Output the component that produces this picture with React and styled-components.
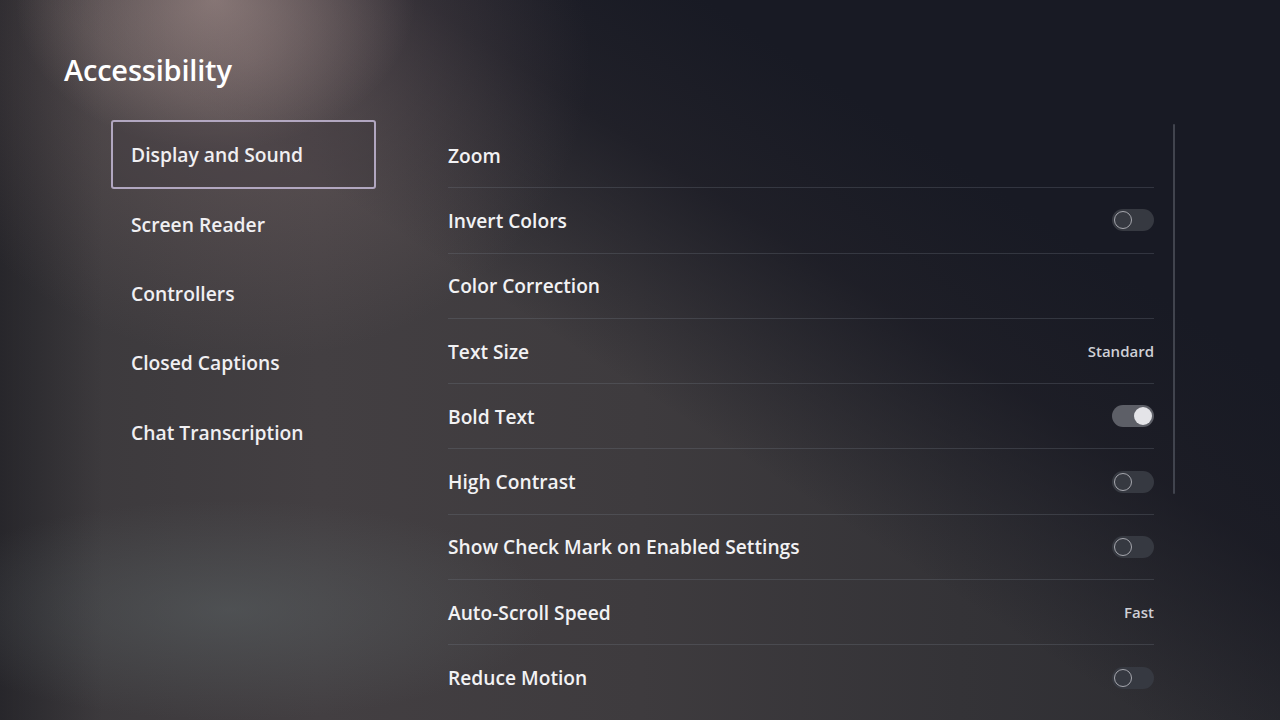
import React from "react";
import styled, { createGlobalStyle } from "styled-components";

const GlobalStyle = createGlobalStyle`
  html, body {
    margin: 0;
    padding: 0;
    background: #1a1c24;
  }
  * {
    box-sizing: border-box;
  }
`;

const Screen = styled.div`
  position: relative;
  width: 1280px;
  height: 720px;
  overflow: hidden;
  font-family: "Open Sans", "Noto Sans", sans-serif;
  color: #f2f2f4;
  background:
    radial-gradient(ellipse 200px 150px at 215px 0px, rgba(190, 165, 160, 0.5), rgba(190, 165, 160, 0) 100%),
    radial-gradient(ellipse 340px 300px at 250px 60px, rgba(140, 118, 118, 0.4), rgba(140, 118, 118, 0) 100%),
    radial-gradient(ellipse 320px 110px at 230px 610px, rgba(92, 100, 102, 0.5), rgba(92, 100, 102, 0) 100%),
    linear-gradient(90deg, rgba(24, 24, 30, 0.55) 0%, rgba(24, 24, 30, 0) 8%),
    linear-gradient(33deg, rgba(22, 23, 33, 0) 0%, rgba(22, 23, 33, 0) 48%, rgba(22, 23, 33, 0.75) 64%, rgba(24, 26, 36, 1) 76%),
    linear-gradient(90deg, #3a383b 0%, #433f42 25%, #3e3b3e 50%, #343337 75%, #2c2c31 100%);
`;

const Header = styled.header`
  height: 120px;
  padding: 50px 0 0 64px;
`;

const Title = styled.h1`
  margin: 0;
  font-size: 29px;
  line-height: 40px;
  font-weight: 600;
  letter-spacing: -0.2px;
  color: #ffffff;
`;

const Body = styled.div`
  display: flex;
  align-items: flex-start;
  padding-left: 111px;
`;

const Nav = styled.nav`
  display: flex;
  flex-direction: column;
  width: 265px;
`;

const NavItem = styled.div`
  height: 69.4px;
  display: flex;
  align-items: center;
  padding-left: 18px;
  font-size: 19.3px;
  font-weight: 600;
  color: #f0eff2;
  border: 2px solid ${(p) => (p.$active ? "rgba(196, 186, 214, 0.85)" : "transparent")};
  border-radius: 3px;
  background: ${(p) => (p.$active ? "rgba(60, 54, 60, 0.35)" : "transparent")};
`;

const List = styled.section`
  width: 706px;
  margin-left: 72px;
  padding-top: 3px;
`;

const Row = styled.div`
  height: 65.3px;
  display: flex;
  align-items: center;
  justify-content: space-between;
  border-bottom: 1px solid ${(p) => (p.$last ? "transparent" : "rgba(120, 124, 136, 0.28)")};
`;

const Label = styled.span`
  font-size: 19.2px;
  font-weight: 600;
  color: #f2f2f4;
`;

const Value = styled.span`
  font-size: 15px;
  font-weight: 600;
  color: #cfd0d6;
`;

const Track = styled.div`
  position: relative;
  width: 42px;
  height: 22px;
  border-radius: 11px;
  background: ${(p) => (p.$on ? "#5d5f67" : "#363941")};
`;

const Knob = styled.div`
  position: absolute;
  top: 2px;
  left: ${(p) => (p.$on ? "22px" : "2px")};
  width: 18px;
  height: 18px;
  border-radius: 50%;
  background: ${(p) => (p.$on ? "#e4e4e8" : "transparent")};
  border: ${(p) => (p.$on ? "none" : "1.5px solid #a6a7ae")};
`;

const Scrollbar = styled.div`
  width: 2px;
  height: 370px;
  margin-left: 19px;
  margin-top: 4px;
  background: #41444e;
  border-radius: 1px;
`;

const Toggle = ({ on }) => (
  <Track $on={on}>
    <Knob $on={on} />
  </Track>
);

const navItems = [
  "Display and Sound",
  "Screen Reader",
  "Controllers",
  "Closed Captions",
  "Chat Transcription",
];

const settings = [
  { label: "Zoom" },
  { label: "Invert Colors", toggle: false },
  { label: "Color Correction" },
  { label: "Text Size", value: "Standard" },
  { label: "Bold Text", toggle: true },
  { label: "High Contrast", toggle: false },
  { label: "Show Check Mark on Enabled Settings", toggle: false },
  { label: "Auto-Scroll Speed", value: "Fast" },
  { label: "Reduce Motion", toggle: false },
];

export default function App() {
  return (
    <>
      <GlobalStyle />
      <Screen>
        <Header>
          <Title>Accessibility</Title>
        </Header>
        <Body>
          <Nav>
            {navItems.map((item, i) => (
              <NavItem key={item} $active={i === 0}>
                {item}
              </NavItem>
            ))}
          </Nav>
          <List>
            {settings.map((s, i) => (
              <Row key={s.label} $last={i === settings.length - 1}>
                <Label>{s.label}</Label>
                {s.value && <Value>{s.value}</Value>}
                {s.toggle !== undefined && <Toggle on={s.toggle} />}
              </Row>
            ))}
          </List>
          <Scrollbar />
        </Body>
      </Screen>
    </>
  );
}
